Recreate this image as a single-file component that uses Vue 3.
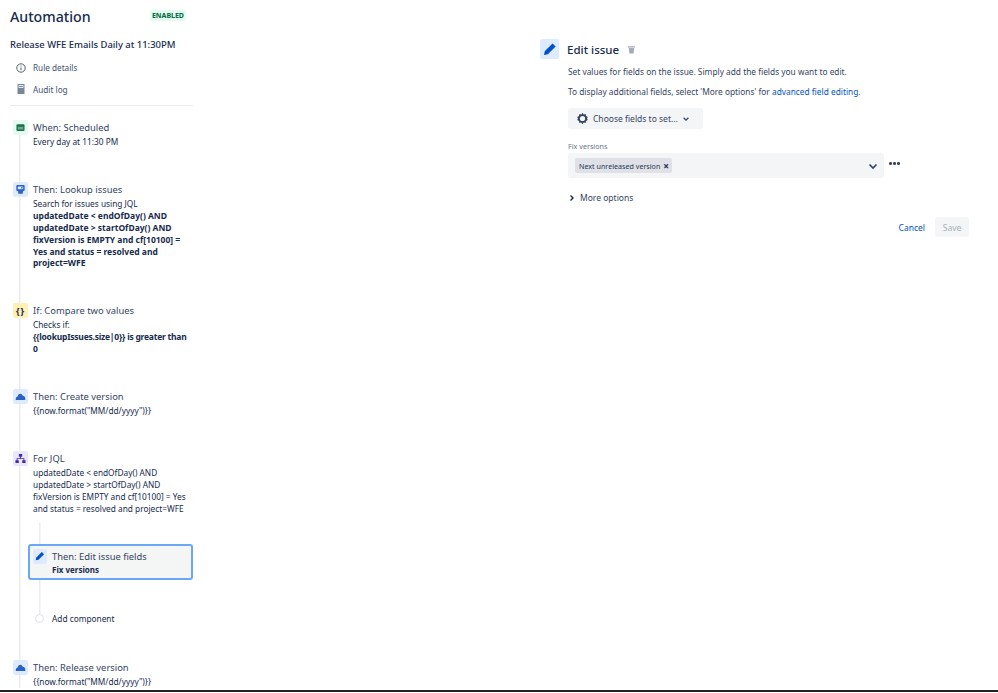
<script setup>
const lookupLines = ['updatedDate < endOfDay() AND', 'updatedDate > startOfDay() AND', 'fixVersion is EMPTY and cf[10100] =', 'Yes and status = resolved and', 'project=WFE']
const jqlLines = ['updatedDate < endOfDay() AND', 'updatedDate > startOfDay() AND', 'fixVersion is EMPTY and cf[10100] = Yes', 'and status = resolved and project=WFE']
</script>

<template>
  <div class="page">
    <div class="main">
      <aside class="side">
        <header class="head">
          <h1>Automation</h1>
          <span class="lozenge">ENABLED</span>
        </header>
        <h2 class="rule">Release WFE Emails Daily at 11:30PM</h2>
        <nav class="links">
          <a class="link">
            <svg width="12" height="12" viewBox="0 0 12 12"><circle cx="6" cy="6" r="4.200" fill="none" stroke="#505f79" stroke-width="1"/><rect x="5.500" y="5.300" width="1" height="3" fill="#505f79"/><rect x="5.500" y="3.500" width="1" height="1" fill="#505f79"/></svg>
            Rule details
          </a>
          <a class="link">
            <svg width="12" height="12" viewBox="0 0 12 12"><path d="M2.500 1h7v10h-7z" fill="#7a869a"/><path d="M3.600 2.200h4.800v2.600H3.600z" fill="#fff"/><path d="M4.200 3h3.600v1H4.200z" fill="#7a869a"/></svg>
            Audit log
          </a>
        </nav>
        <div class="flow">
          <div class="step">
            <span class="ico green"><svg width="9" height="9" viewBox="0 0 10 10"><rect x="0.500" y="1.500" width="9" height="7.500" rx="1.200" fill="#216e4e"/><rect x="2" y="4.200" width="6" height="3" fill="#5fae8c"/></svg></span>
            <div class="body">
              <div class="t">When: Scheduled</div>
              <div class="s">Every day at 11:30 PM</div>
            </div>
          </div>
          <div class="step">
            <span class="ico blue"><svg width="11" height="11" viewBox="0 0 12 12"><path d="M2.500 1h7a1 1 0 0 1 1 1v5l-2 1.200V10.500h-5V8.200l-2-1.200V2a1 1 0 0 1 1-1z" fill="#2b62c4"/><rect x="3" y="2.800" width="6" height="3" rx="1.200" fill="#deebff"/><circle cx="7.400" cy="4.300" r=".9" fill="#2b62c4"/></svg></span>
            <div class="body">
              <div class="t">Then: Lookup issues</div>
              <div class="s">Search for issues using JQL</div>
              <div v-for="l in lookupLines" :key="l" class="s b">{{ l }}</div>
            </div>
          </div>
          <div class="step">
            <span class="ico yellow">{}</span>
            <div class="body">
              <div class="t">If: Compare two values</div>
              <div class="s">Checks if:</div>
              <div class="s b tight">&#123;&#123;lookupIssues.size|0&#125;&#125; is greater than</div>
              <div class="s b">0</div>
            </div>
          </div>
          <div class="step">
            <span class="ico blue"><svg width="11" height="9" viewBox="0 0 12 10"><path d="M.8 9V7.200C.8 6 1.700 5.400 2.700 5.400 3 3.300 4.300 2 5.800 2c1.300 0 2.300.9 2.600 2.300 1.700 0 2.900 1 2.900 2.700V9z" fill="#2b62c4"/></svg></span>
            <div class="body">
              <div class="t">Then: Create version</div>
              <div class="s">&#123;&#123;now.format("MM/dd/yyyy")&#125;&#125;</div>
            </div>
          </div>
          <div class="step">
            <span class="ico purple"><svg width="11" height="11" viewBox="0 0 12 12"><path d="M4.200 1h3.600v3H6.500v1.600h3.700V8h1.300v3H7.900V8h1.300V6.600H2.800V8h1.300v3H.5V8h1.300V5.600h3.700V4H4.200z" fill="#403294"/></svg></span>
            <div class="body">
              <div class="t">For JQL</div>
              <div v-for="l in jqlLines" :key="l" class="s">{{ l }}</div>
            </div>
          </div>
          <div class="branch">
            <div class="card">
              <span class="ico blue small"><svg width="10" height="10" viewBox="0 0 12 12"><path d="M8.200 1.200l2.600 2.600-6.600 6.600-3.400.8.800-3.400z" fill="#0052cc"/></svg></span>
              <div class="body">
                <div class="t">Then: Edit issue fields</div>
                <div class="s b fix">Fix versions</div>
              </div>
            </div>
            <div class="add">
              <span class="dot"></span>
              <span class="s">Add component</span>
            </div>
          </div>
          <div class="step">
            <span class="ico blue"><svg width="11" height="9" viewBox="0 0 12 10"><path d="M.8 9V7.200C.8 6 1.700 5.400 2.700 5.400 3 3.300 4.300 2 5.800 2c1.300 0 2.300.9 2.600 2.300 1.700 0 2.900 1 2.900 2.700V9z" fill="#2b62c4"/></svg></span>
            <div class="body">
              <div class="t">Then: Release version</div>
              <div class="s">&#123;&#123;now.format("MM/dd/yyyy")&#125;&#125;</div>
            </div>
          </div>
        </div>
      </aside>

      <section class="panel">
        <div class="panel-head">
          <span class="ico-lg"><svg width="14" height="14" viewBox="0 0 12 12"><path d="M8.200 1.200l2.600 2.600-6.600 6.600-3.400.8.800-3.400z" fill="#0052cc"/></svg></span>
          <h3>Edit issue</h3>
          <svg class="trash" width="9" height="9" viewBox="0 0 10 10"><path d="M1 1.500h8v1.200H1zM2 3.400h6l-.6 6H2.600z" fill="#a5adba"/></svg>
        </div>
        <div class="form">
          <p>Set values for fields on the issue. Simply add the fields you want to edit.</p>
          <p>To display additional fields, select 'More options' for <a class="blue-link">advanced field editing</a>.</p>
          <button class="choose">
            <svg width="13" height="13" viewBox="0 0 24 24"><path d="M12 1.500l2.200 3 3.500-.8.800 3.500 3.300 2-1.500 2.800 1.500 2.800-3.300 2-.8 3.500-3.500-.8-2.200 3-2.200-3-3.500.8-.8-3.500-3.300-2L3.700 12 2.200 9.200l3.300-2 .8-3.500 3.500.8z" fill="#344563"/><circle cx="12" cy="12" r="4.800" fill="#f4f5f7"/></svg>
            <span>Choose fields to set...</span>
            <svg width="8" height="8" viewBox="0 0 10 10"><path d="M2 3.500l3 3 3-3" fill="none" stroke="#344563" stroke-width="1.600"/></svg>
          </button>
          <label class="label">Fix versions</label>
          <div class="select-row">
            <div class="select">
              <span class="tag">Next unreleased version <span class="x">×</span></span>
              <svg width="12" height="12" viewBox="0 0 12 12"><path d="M2.500 4.500L6 8l3.500-3.500" fill="none" stroke="#344563" stroke-width="1.700"/></svg>
            </div>
            <span class="dots"><i></i><i></i><i></i></span>
          </div>
          <div class="more">
            <svg width="8" height="8" viewBox="0 0 8 8"><path d="M2.500 1.500L5 4 2.500 6.500" fill="none" stroke="#172b4d" stroke-width="1.400"/></svg>
            More options
          </div>
          <div class="actions">
            <a class="cancel">Cancel</a>
            <button class="save" disabled>Save</button>
          </div>
        </div>
      </section>
    </div>
    <div class="edge"></div>
  </div>
</template>

<style>
html, body { margin: 0; background: #fff; }
</style>

<style scoped>
.page {
  width: 998px;
  height: 693px;
  display: flex;
  flex-direction: column;
  overflow: hidden;
  font-family: "Noto Sans", "Open Sans", sans-serif;
  color: #172b4d;
}
.main { flex: 1; min-height: 0; display: flex; overflow: hidden; }
.edge { height: 2px; background: #222; margin-bottom: 1px; }

.side { width: 183px; margin-left: 10px; flex: none; }
.head { display: flex; align-items: center; justify-content: space-between; height: 20px; margin-top: 6px; padding-right: 7px; }
h1 { margin: 0; font-size: 14.200px; font-weight: 500; color: #172b4d; }
.lozenge { font-size: 7px; font-weight: 700; color: #006644; background: #e3fcef; padding: 1px 2px; border-radius: 2px; position: relative; top: -1px; }
.rule { margin: 12px 0 0; font-size: 9.450px; font-weight: 500; line-height: 14px; }
.links { display: flex; flex-direction: column; padding-bottom: 5px; border-bottom: 1px solid #ebecf0; margin-top: 5px; }
.link { display: flex; align-items: center; gap: 6px; height: 21.500px; padding-left: 5px; font-size: 8.200px; color: #42526e; }

.flow { margin-top: 14px; background: linear-gradient(#ebecf0, #ebecf0) 9px 15px / 1.500px 100% no-repeat; }
.step { display: flex; gap: 5px; padding-left: 3px; margin-bottom: 34px; }
.ico { width: 15px; height: 15px; flex: none; display: flex; align-items: center; justify-content: center; border-radius: 2px; }
.ico.green { background: #e3fcef; }
.ico.blue { background: #deebff; }
.ico.yellow { background: #fff0b3; font-size: 9px; font-weight: 700; color: #172b4d; line-height: 1; letter-spacing: 1px; }
.ico.purple { background: #eae6ff; }
.body { min-width: 0; }
.t { font-size: 9.400px; line-height: 15px; color: #344563; white-space: nowrap; }
.s { font-size: 8.300px; line-height: 11.900px; color: #172b4d; white-space: nowrap; }
.s.b { font-size: 8.500px; font-weight: 700; }
.s.b.tight { letter-spacing: -0.230px; }
.s.b.fix { font-size: 8px; }
.step .t + .s { margin-top: 1px; }

.branch { display: flow-root; margin: -26px 0 35.500px 18px; background: linear-gradient(#ebecf0, #ebecf0) 11px 0 / 1.500px 96px no-repeat; }
.card { display: flex; gap: 5px; align-items: flex-start; height: 36px; box-sizing: border-box; width: 165px; padding: 2.500px 3px; border: 2px solid #6aa8f7; border-radius: 3px; background: #f4f5f5; margin-top: 21.500px; }
.ico.small { width: 14px; height: 15px; }
.add { display: flex; align-items: center; gap: 8px; margin: 32.500px 0 0 7px; height: 12px; }
.dot { width: 7px; height: 7px; border: 1px solid #dfe1e6; border-radius: 50%; background: #fff; flex: none; }

.panel { margin-left: 347px; padding-top: 39px; width: 430px; flex: none; }
.panel-head { display: flex; align-items: center; }
.ico-lg { width: 19px; height: 20px; background: #deebff; border-radius: 2px; display: flex; align-items: center; justify-content: center; }
h3 { margin: 0 8px 0 8px; font-size: 11.500px; font-weight: 500; color: #172b4d; }
.form { margin-left: 28px; width: 401px; }
p { margin: 0; font-size: 8.330px; line-height: 12px; color: #344563; white-space: nowrap; }
.panel-head + .form p:first-child { margin-top: 7px; }
p + p { margin-top: 8px; }
.blue-link { color: #0052cc; }
.choose { display: flex; align-items: center; gap: 4px; width: 135px; height: 21px; margin-top: 10px; padding: 0 0 0 8px; border: 0; border-radius: 3px; background: #f4f5f7; font: inherit; font-size: 8.500px; color: #344563; }
.label { display: block; margin-top: 12px; font-size: 7.200px; line-height: 10px; color: #6b778c; }
.select-row { display: flex; align-items: flex-start; margin-top: 2px; }
.select { width: 316px; height: 25px; box-sizing: border-box; display: flex; align-items: center; justify-content: space-between; padding: 0 5px 0 7px; background: #f4f5f7; border-radius: 3px; }
.tag { display: flex; align-items: center; gap: 3px; height: 15px; padding: 0 3px 0 4px; background: #dfe1e6; border-radius: 2px; font-size: 7.150px; color: #253858; }
.x { font-size: 10px; font-weight: 700; line-height: 1; color: #172b4d; }
.dots { display: flex; gap: 1.500px; margin: 9px 0 0 5px; }
.dots i { width: 2.500px; height: 2.500px; border-radius: 50%; background: #344563; }
.more { display: flex; align-items: center; gap: 4px; margin-top: 14px; font-size: 8.500px; line-height: 12px; color: #344563; }
.actions { display: flex; justify-content: flex-end; align-items: center; gap: 10px; margin-top: 13px; }
.cancel { font-size: 8.500px; color: #0052cc; }
.save { width: 34px; height: 20px; padding: 0; border: 0; border-radius: 3px; background: #f4f5f7; font: inherit; font-size: 8.500px; color: #a5adba; }
</style>
